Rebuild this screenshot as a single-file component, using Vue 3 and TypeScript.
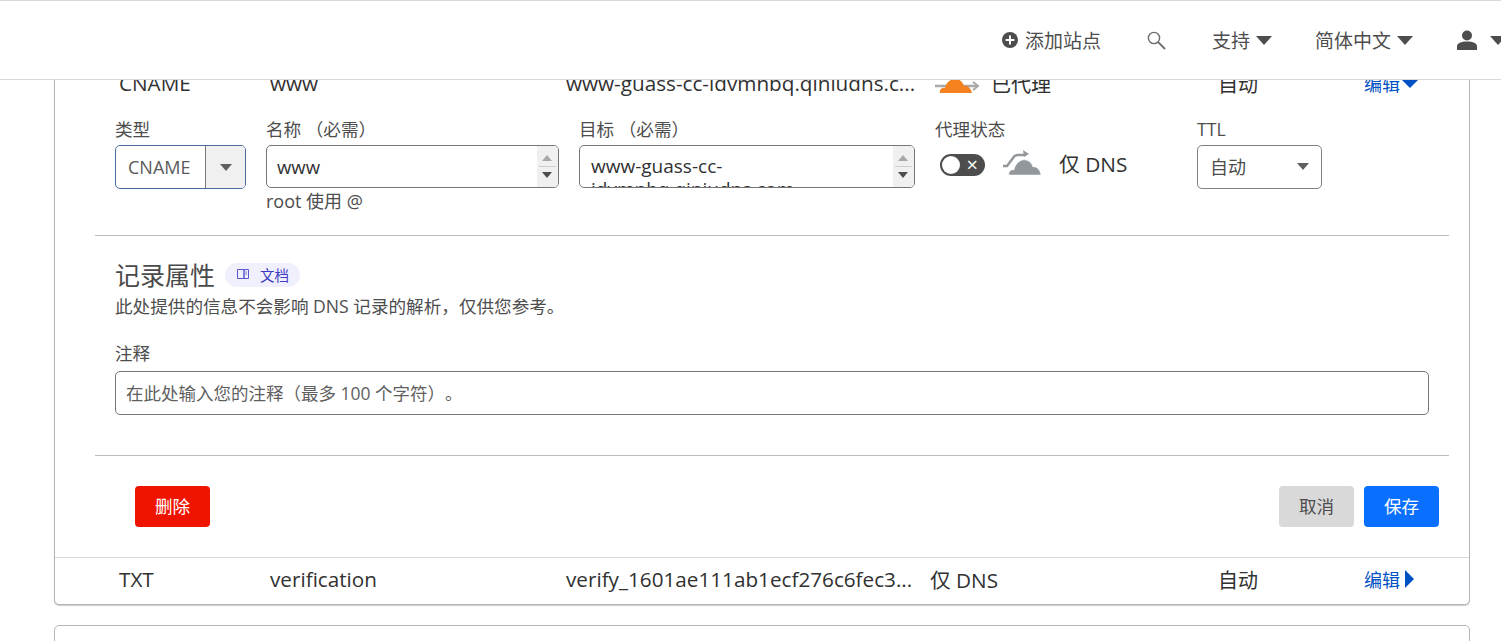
<template>
  <div class="page">
    <header class="topbar">
      <a class="nav-item add-site">
        <svg class="plus" viewBox="0 0 16 16" width="16" height="16">
          <circle cx="8" cy="8" r="8" fill="#4d4d4d" />
          <path d="M8 3.600v8.800M3.600 8h8.800" stroke="#fff" stroke-width="2" />
        </svg>
        添加站点
      </a>
      <a class="nav-item search">
        <svg viewBox="0 0 20 20" width="20" height="20" fill="none" stroke="#6b6b6b">
          <circle cx="8" cy="8" r="5.600" stroke-width="1.400" />
          <path d="M12.200 12.200 19 19" stroke-width="1.800" />
        </svg>
      </a>
      <a class="nav-item support">支持<i class="caret"></i></a>
      <a class="nav-item lang">简体中文<i class="caret"></i></a>
      <a class="nav-item user">
        <svg viewBox="0 0 20 20" width="20" height="20" fill="#4d4d4d">
          <circle cx="10" cy="5.500" r="5" />
          <path d="M0 20v-3.500C0 13 4 11.500 10 11.500s10 1.500 10 5V20Z" />
        </svg>
        <i class="caret"></i>
      </a>
    </header>

    <main class="content">
      <section class="card">
        <div class="record-row">
          <span>CNAME</span>
          <span>www</span>
          <span>www-guass-cc-idvmnbq.qiniudns.c...</span>
          <span class="proxied cjk">
            <svg class="cloud-small" viewBox="0 0 46 20" width="46" height="20">
              <path d="M1 12h43" stroke="#a9a9a9" stroke-width="2.500" />
              <path d="m39 8 5 4-5 4" fill="none" stroke="#a9a9a9" stroke-width="2" />
              <path d="M6 19C5 16 8 13 11 14 12 9 17 4 23 5 27 6 29 9 30 12 34 11 37 15 38 19Z" fill="#f6821f" />
            </svg>
            已代理
          </span>
          <span class="cjk">自动</span>
          <a class="edit-link">编辑<i class="tri-down"></i></a>
        </div>

        <div class="edit-form">
          <div class="field field-type">
            <label class="field-label">类型</label>
            <div class="select-box">
              <span class="select-value">CNAME</span>
              <span class="select-arrow"><i class="caret small"></i></span>
            </div>
          </div>
          <div class="field field-name">
            <label class="field-label">名称 （必需）</label>
            <div class="textbox">
              <div class="textbox-text">www</div>
              <div class="spinner">
                <i class="spin-up"></i>
                <i class="spin-down"></i>
              </div>
            </div>
            <p class="hint">root 使用 @</p>
          </div>
          <div class="field field-target">
            <label class="field-label">目标 （必需）</label>
            <div class="textbox">
              <div class="textbox-text">www-guass-cc-<br />idvmnbq.qiniudns.com</div>
              <div class="spinner">
                <i class="spin-up"></i>
                <i class="spin-down"></i>
              </div>
            </div>
          </div>
          <div class="field field-proxy">
            <label class="field-label">代理状态</label>
            <div class="proxy-state">
              <span class="toggle"><i class="knob"></i><em class="toggle-x">×</em></span>
              <svg class="cloud-gray" viewBox="0 0 40 28" width="40" height="28">
                <path d="M1 16h4l6-8c1-2 3-3 5-3h6" fill="none" stroke="#92979b" stroke-width="2.400" />
                <path d="m21 0 6 4-5 3Z" fill="#92979b" />
                <path d="M7 25C6 22 9 19 12 20 13 14 18 9 24 10 28 11 30 14 31 17 35 16 38 20 39 25Z" fill="#92979b" stroke="#fff" stroke-width="0.500" />
              </svg>
              <span class="proxy-label">仅 DNS</span>
            </div>
          </div>
          <div class="field field-ttl">
            <label class="field-label">TTL</label>
            <div class="ttl-box">
              <span>自动</span>
              <i class="caret small"></i>
            </div>
          </div>
        </div>

        <hr class="divider" />

        <div class="attrs">
          <div class="attrs-title">
            <h2>记录属性</h2>
            <a class="doc-pill">
              <svg viewBox="0 0 14 12" width="14" height="12" fill="none" stroke="#5a56cf" stroke-width="1">
                <path d="M1.500 1.500h6.500v9H1.500ZM8 1.500h4.500v9H8ZM9.500 4h1.500M9.500 6h1.500" />
              </svg>
              文档
            </a>
          </div>
          <p class="attrs-desc">此处提供的信息不会影响 DNS 记录的解析，仅供您参考。</p>
          <label class="field-label comment-label">注释</label>
          <input class="comment-input" type="text" placeholder="在此处输入您的注释（最多 100 个字符）。" />
        </div>

        <hr class="divider" />

        <div class="actions">
          <button class="btn btn-danger">删除</button>
          <div class="actions-right">
            <button class="btn btn-cancel">取消</button>
            <button class="btn btn-primary">保存</button>
          </div>
        </div>

        <div class="record-row record-row--bordered">
          <span>TXT</span>
          <span>verification</span>
          <span>verify_1601ae111ab1ecf276c6fec3...</span>
          <span>仅 DNS</span>
          <span class="cjk">自动</span>
          <a class="edit-link">编辑<i class="tri-right"></i></a>
        </div>
      </section>

      <section class="card card-next"></section>
    </main>
  </div>
</template>

<script setup lang="ts">
</script>

<style>
html,
body {
  margin: 0;
  background: #fff;
}
</style>

<style scoped>
.page {
  height: 641px;
  overflow: hidden;
  font-family: "Open Sans", "Noto Sans CJK SC", sans-serif;
  color: #313131;
  background: #fff;
  text-spacing-trim: space-all;
}

.topbar {
  position: relative;
  z-index: 2;
  box-sizing: border-box;
  height: 80px;
  display: flex;
  align-items: center;
  background: #fff;
  border-top: 1px solid #d9d9d9;
  border-bottom: 1px solid #d9d9d9;
  font-size: 19px;
  color: #4d4d4d;
}

.nav-item {
  display: flex;
  align-items: center;
  white-space: nowrap;
}

.add-site {
  margin-left: 1002px;
}

.plus {
  margin-right: 7px;
}

.search {
  margin-left: 45px;
}

.support {
  margin-left: 46px;
}

.lang {
  margin-left: 43px;
}

.user {
  margin-left: 44px;
}

.caret {
  display: inline-block;
  width: 0;
  height: 0;
  margin-left: 6px;
  border-left: 8.500px solid transparent;
  border-right: 8.500px solid transparent;
  border-top: 9px solid #4d4d4d;
}

.caret.small {
  margin: 0;
  border-left-width: 6.500px;
  border-right-width: 6.500px;
  border-top-width: 7px;
  border-top-color: #5f5f5f;
}

.user .caret {
  margin-left: 13px;
}

.content {
  padding: 0 31px 0 54px;
}

.card {
  box-sizing: border-box;
  width: 1416px;
  background: #fff;
  border: 1px solid #b6b6b6;
  border-radius: 5px;
  box-shadow: 0 1px 1px rgba(0, 0, 0, 0.2);
}

.card:first-child {
  margin-top: -19px;
}

.card-next {
  height: 60px;
  margin-top: 20px;
  box-shadow: none;
}

.record-row {
  display: grid;
  grid-template-columns: 151px 296px 364px 288px 146px 1fr;
  align-items: center;
  box-sizing: border-box;
  height: 46px;
  padding: 0 0 4px 64px;
  font-size: 20.700px;
  white-space: nowrap;
}

.record-row--bordered {
  height: 47px;
  border-top: 1px solid #d9d9d9;
}

.cjk {
  font-size: 20px;
}

.proxied {
  display: flex;
  align-items: center;
  gap: 11px;
}

.cloud-small {
  margin: 2px 0 0 4px;
}

.edit-link {
  display: flex;
  align-items: center;
  color: #0051c3;
  font-size: 18px;
}

.tri-down {
  margin-left: 1px;
  border-left: 9px solid transparent;
  border-right: 9px solid transparent;
  border-top: 9px solid #0051c3;
}

.tri-right {
  margin-left: 5px;
  border-top: 9px solid transparent;
  border-bottom: 9px solid transparent;
  border-left: 9px solid #0051c3;
}

.edit-form {
  display: flex;
  gap: 20px;
  height: 127px;
  padding: 9px 0 0 60px;
  box-sizing: border-box;
}

.field-type {
  width: 131px;
}

.field-name {
  width: 293px;
}

.field-target {
  width: 336px;
}

.field-proxy {
  width: 242px;
}

.field-ttl {
  width: 125px;
}

.field-label {
  display: block;
  height: 24px;
  margin-bottom: 4px;
  font-size: 17.600px;
  line-height: 24px;
  color: #4d4d4d;
  white-space: pre;
}

.select-box {
  box-sizing: border-box;
  display: flex;
  height: 44px;
  border: 1px solid #4a6da0;
  border-radius: 5px;
  overflow: hidden;
  font-size: 18px;
  color: #5a5a5a;
}

.select-value {
  box-sizing: border-box;
  width: 90px;
  padding-left: 12px;
  line-height: 42px;
  border-right: 1px solid #7a7a7a;
}

.select-arrow {
  flex: 1;
  display: flex;
  align-items: center;
  justify-content: center;
  background: #f0f0f0;
}

.textbox {
  box-sizing: border-box;
  position: relative;
  height: 43px;
  border: 1px solid #757575;
  border-radius: 5px;
  overflow: hidden;
}

.textbox-text {
  padding: 9px 10px;
  font-size: 19px;
  line-height: 23px;
  color: #313131;
  white-space: nowrap;
}

.field-name .textbox-text {
  font-size: 18.500px;
}

.field-target .textbox-text {
  padding-left: 11px;
}

.spinner {
  position: absolute;
  top: 0;
  right: 0;
  bottom: 0;
  width: 21px;
  background: #f0f0f0;
}

.spin-up,
.spin-down {
  position: absolute;
  left: 5px;
  border-left: 5px solid transparent;
  border-right: 5px solid transparent;
}

.spin-up {
  top: 9px;
  border-bottom: 6px solid #a8a8a8;
}

.spin-down {
  bottom: 9px;
  border-top: 6px solid #4d4d4d;
}

.spinner::after {
  content: "";
  position: absolute;
  top: 20px;
  left: 2px;
  right: 2px;
  height: 1px;
  background: #cfcfcf;
}

.hint {
  margin: 1px 0 0;
  font-size: 18px;
  line-height: 24px;
  color: #4d4d4d;
}

.proxy-state {
  display: flex;
  align-items: center;
  height: 40px;
}

.toggle {
  position: relative;
  box-sizing: border-box;
  width: 45px;
  height: 22px;
  margin-left: 5px;
  border-radius: 11px;
  background: #4d4d4d;
}

.knob {
  position: absolute;
  top: 2px;
  left: 2px;
  width: 18px;
  height: 18px;
  border-radius: 50%;
  background: #fff;
}

.toggle-x {
  position: absolute;
  top: 0;
  right: 7px;
  font-style: normal;
  font-size: 20px;
  line-height: 22px;
  color: #fff;
}

.cloud-gray {
  margin: -3px 0 0 17px;
}

.proxy-label {
  margin: -4px 0 0 17px;
  font-size: 20.800px;
}

.ttl-box {
  box-sizing: border-box;
  display: flex;
  align-items: center;
  justify-content: space-between;
  height: 44px;
  padding: 0 12px 2px 12px;
  border: 1px solid #808080;
  border-radius: 5px;
  font-size: 18px;
  color: #4d4d4d;
}

.divider {
  height: 1px;
  margin: 0 20px 0 40px;
  border: 0;
  background: #bdbdbd;
}

.attrs {
  height: 219px;
  box-sizing: border-box;
  padding: 25px 40px 0 60px;
}

.attrs-title {
  display: flex;
  align-items: center;
  height: 28px;
}

.attrs-title h2 {
  margin: 0;
  font-size: 25px;
  font-weight: 400;
  line-height: 28px;
  color: #4a4a4a;
}

.doc-pill {
  display: flex;
  align-items: center;
  gap: 10px;
  box-sizing: border-box;
  width: 75px;
  height: 24px;
  margin-left: 10px;
  padding: 0 0 2px 11px;
  border-radius: 12px;
  background: #f0effc;
  font-size: 14.500px;
  color: #3f3bc4;
}

.attrs-desc {
  margin: 5px 0 22px;
  font-size: 17.600px;
  line-height: 25px;
  color: #4d4d4d;
}

.comment-label {
  margin-bottom: 6px;
}

.comment-input {
  display: block;
  box-sizing: border-box;
  width: 1314px;
  height: 44px;
  padding: 0 10px;
  border: 1px solid #757575;
  border-radius: 5px;
  outline: none;
  font-family: inherit;
  font-size: 17.500px;
  color: #313131;
  text-spacing-trim: space-all;
}

.comment-input::placeholder {
  color: #5f5f5f;
  opacity: 1;
}

.actions {
  display: flex;
  justify-content: space-between;
  height: 101px;
  box-sizing: border-box;
  padding: 30px 30px 0 80px;
}

.actions-right {
  display: flex;
  gap: 10px;
}

.btn {
  width: 75px;
  height: 41px;
  padding: 0 0 2px;
  border: 0;
  border-radius: 4px;
  font-family: inherit;
  font-size: 17.600px;
}

.btn-danger {
  background: #ef1400;
  color: #fff;
}

.btn-cancel {
  background: #d9d9d9;
  color: #4d4d4d;
}

.btn-primary {
  background: #086fff;
  color: #fff;
}
</style>
